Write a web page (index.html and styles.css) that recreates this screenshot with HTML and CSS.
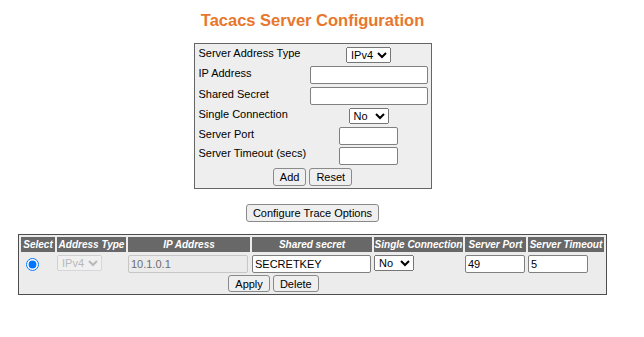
FILE: index.html
```html
<!DOCTYPE html>
<html lang="en">
<head>
	<meta charset="UTF-8">
	<title>Tacacs Server Configuration</title>
	<link rel="stylesheet" href="styles.css">
</head>
<body>
	<div class="page">
		<h1 class="title">Tacacs Server Configuration</h1>

		<div class="addbox">
			<form class="addform">
				<label>Server Address Type</label>
				<span class="field"><select class="sel"><option>IPv4</option><option>IPv6</option></select></span>
				<label>IP Address</label>
				<span class="field"><input type="text" class="txt wide"></span>
				<label>Shared Secret</label>
				<span class="field"><input type="text" class="txt wide"></span>
				<label>Single Connection</label>
				<span class="field"><select class="sel"><option>No</option><option>Yes</option></select></span>
				<label>Server Port</label>
				<span class="field"><input type="text" class="txt short"></span>
				<label class="last">Server Timeout (secs)</label>
				<span class="field"><input type="text" class="txt short"></span>
				<div class="buttons">
					<input type="button" class="btn" value="Add">
					<input type="button" class="btn" value="Reset">
				</div>
			</form>
		</div>

		<div class="trace">
			<input type="button" class="btn" value="Configure Trace Options">
		</div>

		<table class="servers">
			<colgroup>
				<col style="width:34px">
				<col style="width:69px">
				<col style="width:122px">
				<col style="width:120px">
				<col style="width:89px">
				<col style="width:61px">
				<col style="width:76px">
			</colgroup>
			<tr>
				<th>Select</th>
				<th>Address Type</th>
				<th>IP Address</th>
				<th>Shared secret</th>
				<th>Single Connection</th>
				<th>Server Port</th>
				<th>Server Timeout</th>
			</tr>
			<tr>
				<td><input type="radio" name="sel" checked></td>
				<td><select class="sel" disabled><option>IPv4</option><option>IPv6</option></select></td>
				<td><input type="text" class="txt ip" value="10.1.0.1" disabled></td>
				<td><input type="text" class="txt secret" value="SECRETKEY"></td>
				<td><select class="sel"><option>No</option><option>Yes</option></select></td>
				<td><input type="text" class="txt port" value="49"></td>
				<td><input type="text" class="txt port" value="5"></td>
			</tr>
			<tr>
				<td colspan="6" class="actions">
					<input type="button" class="btn small" value="Apply">
					<input type="button" class="btn small" value="Delete">
				</td>
				<td></td>
			</tr>
		</table>
	</div>
</body>
</html>
```
FILE: styles.css
```css
*{margin:0;padding:0;box-sizing:border-box;}
body{
	margin: 8px;
	font-family: "Liberation Sans", Arial, sans-serif;
	font-size: 11px;
	color: #000;
	background: #fff;
}
.page{width: 609px;}
.title{
	margin: 2px 0 13px;
	font-size: 16.5px;
	line-height: 20px;
	font-weight: bold;
	text-align: center;
	color: #e8772e;
}

/* add server box */
.addbox{
	width: 238px;
	margin: 0 auto;
	border: 1px solid #666;
	background: #eeeeee;
}
.addform{
	display: grid;
	grid-template-columns: 110px 120px;
	grid-auto-rows: 18px;
	column-gap: 2px;
	row-gap: 2.25px;
	padding: 2px 2px 2.5px;
}
.addform label{
	padding-left: 2px;
	line-height: 14px;
	white-space: nowrap;
}
.addform label.last{margin-top: -1px;}
.field{
	display: flex;
	align-items: center;
	justify-content: center;
}
.buttons{
	grid-column: 1 / 3;
	display: flex;
	justify-content: center;
	gap: 3px;
}

/* form controls */
.txt{
	height: 18px;
	padding: 1px 2px;
	font-family: inherit;
	font-size: 11px;
	border: 1px solid #808080;
	border-radius: 2px;
	background: #fff;
	color: #000;
}
.wide{width: 118px;}
.short{width: 59px;}
.txt:disabled{
	background: #ebebeb;
	border-color: #c6c6c6;
	color: #6d6d6d;
}
.sel{
	height: 16px;
	font-family: inherit;
	font-size: 11px;
	color: #000;
}
.sel:disabled{color: #a3a3a3;}
.btn{
	height: 18px;
	padding: 0 6px;
	font-family: inherit;
	font-size: 11px;
	color: #000;
	background: #efefef;
	border: 1px solid #8a8a8a;
	border-radius: 3px;
}
.btn.small{height: 17px;}

.trace{
	display: flex;
	justify-content: center;
	margin: 15px 0 12px;
}

/* server list */
.servers{
	width: 589px;
	margin-left: 10px;
	table-layout: fixed;
	border-collapse: separate;
	border-spacing: 2px;
	border: 1px solid #4d4d4d;
	background: #ececec;
}
.servers th{
	height: 15px;
	padding: 0;
	line-height: 15px;
	font-size: 10px;
	font-weight: bold;
	font-style: italic;
	color: #fff;
	background: #686868;
	white-space: nowrap;
	overflow: hidden;
	text-align: center;
}
.servers td{
	padding: 1px 0 0;
	vertical-align: top;
	text-align: left;
	white-space: nowrap;
}
.servers td input[type=radio]{margin: 3px 0 0 5px;}
.ip{width: 120px;}
.secret{width: 119px;}
.port{width: 60px;}
.servers td.actions{
	padding: 0;
	height: 17px;
	text-align: center;
}
```
